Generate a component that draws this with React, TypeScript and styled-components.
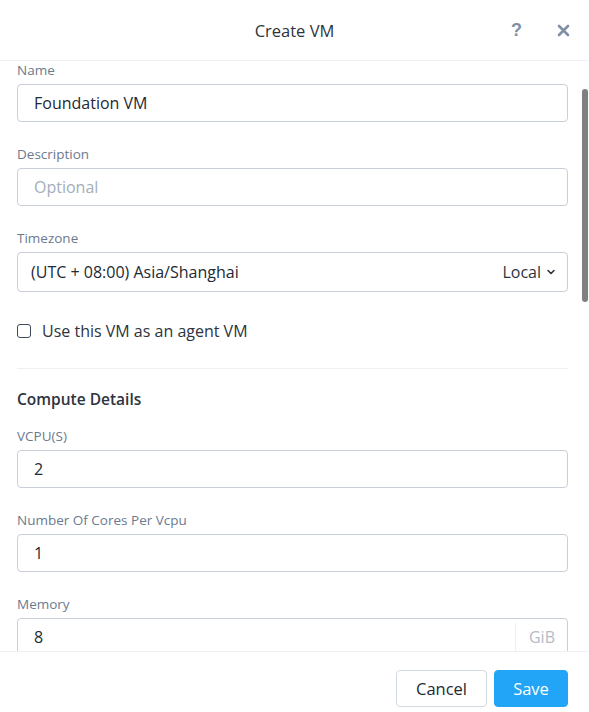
import React from "react";
import styled, { createGlobalStyle } from "styled-components";

const Global = createGlobalStyle`
  html, body { margin: 0; padding: 0; background: #fff; }
  body { font-family: "Open Sans", "Liberation Sans", sans-serif; }
  * { box-sizing: border-box; }
`;

const Modal = styled.div`
  width: 589px;
  height: 712px;
  display: flex;
  flex-direction: column;
  background: #fff;
  overflow: hidden;
`;

const Header = styled.div`
  height: 61px;
  flex: 0 0 61px;
  border-bottom: 1px solid #eef0f3;
  display: flex;
  align-items: center;
  justify-content: center;
  position: relative;
`;

const Title = styled.div`
  font-size: 16.5px;
  color: #2d3440;
`;

const HeaderActions = styled.div`
  position: absolute;
  right: 19px;
  top: 0;
  height: 60px;
  display: flex;
  align-items: center;
  gap: 35px;
`;

const HelpIcon = styled.span`
  font-family: "Liberation Sans", sans-serif;
  font-weight: 700;
  font-size: 18px;
  color: #7f8fa4;
`;

const BodyWrap = styled.div`
  flex: 1 1 auto;
  position: relative;
  overflow: hidden;
`;

const Body = styled.div`
  height: 100%;
  overflow: hidden;
  padding: 1px 21px 0 17px;
`;

const ScrollThumb = styled.div`
  position: absolute;
  right: 1px;
  top: 28px;
  width: 6px;
  height: 213px;
  border-radius: 3px;
  background: #808080;
`;

const SectionTitle = styled.div`
  font-size: 15.5px;
  font-weight: 600;
  color: #2d3440;
  line-height: 20px;
  margin-bottom: 19px;
`;

const Field = styled.div`
  margin-bottom: 24px;
`;

const Label = styled.div`
  font-size: 13.5px;
  line-height: 17px;
  color: #6b7a8f;
  margin-bottom: 5px;
`;

const InputBox = styled.div<{ $tall?: boolean }>`
  height: ${(p) => (p.$tall ? 40 : 38)}px;
  border: 1px solid #c8cfd9;
  border-radius: 4px;
  display: flex;
  align-items: center;
  font-size: 16px;
  color: #222a35;
  background: #fff;
`;

const Value = styled.div<{ $placeholder?: boolean; $pad?: number }>`
  flex: 1;
  padding-left: ${(p) => p.$pad ?? 16}px;
  color: ${(p) => (p.$placeholder ? "#a3adbb" : "#222a35")};
`;

const SelectRight = styled.div`
  display: flex;
  align-items: center;
  gap: 6px;
  padding-right: 12px;
  color: #2d3440;
`;

const Suffix = styled.div`
  align-self: stretch;
  display: flex;
  align-items: center;
  padding: 0 12px 0 13px;
  border-left: 1px solid #eceff3;
  margin: 4px 0;
  color: #b3bcc8;
  font-size: 16px;
`;

const CheckRow = styled.label`
  display: flex;
  align-items: center;
  gap: 11px;
  height: 32px;
  margin: -1px 0 21px;
  font-size: 16px;
  color: #2d3440;
`;

const Box = styled.span`
  width: 14px;
  height: 14px;
  border: 1.5px solid #3e4a5b;
  border-radius: 3px;
`;

const Divider = styled.hr`
  border: none;
  border-top: 1px solid #eef0f3;
  margin: 0 0 20px;
`;

const Footer = styled.div`
  flex: 0 0 61px;
  border-top: 1px solid #eef0f3;
  display: flex;
  justify-content: flex-end;
  align-items: flex-start;
  gap: 7px;
  padding: 18px 21px 0 0;
`;

const Button = styled.button<{ $primary?: boolean }>`
  height: 37px;
  padding: 0 18px;
  min-width: ${(p) => (p.$primary ? 74 : 91)}px;
  border-radius: 4px;
  font-family: inherit;
  font-size: 16.5px;
  border: 1px solid ${(p) => (p.$primary ? "#22a5f7" : "#d3d9e1")};
  background: ${(p) => (p.$primary ? "#22a5f7" : "#fff")};
  color: ${(p) => (p.$primary ? "#fff" : "#222a35")};
`;

const Chevron = () => (
  <svg width="8" height="6" viewBox="0 0 8 6">
    <path d="M1 1.5 L4 4.5 L7 1.5" fill="none" stroke="#2d3440" strokeWidth="1.6" strokeLinecap="round" strokeLinejoin="round" />
  </svg>
);

const CloseIcon = () => (
  <svg width="13" height="13" viewBox="0 0 13 13">
    <path d="M2 2 L11 11 M11 2 L2 11" stroke="#7f8fa4" strokeWidth="2.6" strokeLinecap="round" />
  </svg>
);

const TextField = ({ label, value, placeholder, suffix }: { label: string; value?: string; placeholder?: string; suffix?: string }) => (
  <Field>
    <Label>{label}</Label>
    <InputBox>
      <Value $placeholder={!value}>{value || placeholder}</Value>
      {suffix && <Suffix>{suffix}</Suffix>}
    </InputBox>
  </Field>
);

export default function App() {
  return (
    <>
      <Global />
      <Modal>
        <Header>
          <Title>Create VM</Title>
          <HeaderActions>
            <HelpIcon>?</HelpIcon>
            <CloseIcon />
          </HeaderActions>
        </Header>
        <BodyWrap>
          <Body>
            <TextField label="Name" value="Foundation VM" />
            <TextField label="Description" placeholder="Optional" />
            <Field>
              <Label>Timezone</Label>
              <InputBox $tall>
                <Value $pad={13}>(UTC + 08:00) Asia/Shanghai</Value>
                <SelectRight>
                  Local <Chevron />
                </SelectRight>
              </InputBox>
            </Field>
            <CheckRow>
              <Box />
              Use this VM as an agent VM
            </CheckRow>
            <Divider />
            <SectionTitle>Compute Details</SectionTitle>
            <TextField label="VCPU(S)" value="2" />
            <TextField label="Number Of Cores Per Vcpu" value="1" />
            <TextField label="Memory" value="8" suffix="GiB" />
          </Body>
          <ScrollThumb />
        </BodyWrap>
        <Footer>
          <Button>Cancel</Button>
          <Button $primary>Save</Button>
        </Footer>
      </Modal>
    </>
  );
}
